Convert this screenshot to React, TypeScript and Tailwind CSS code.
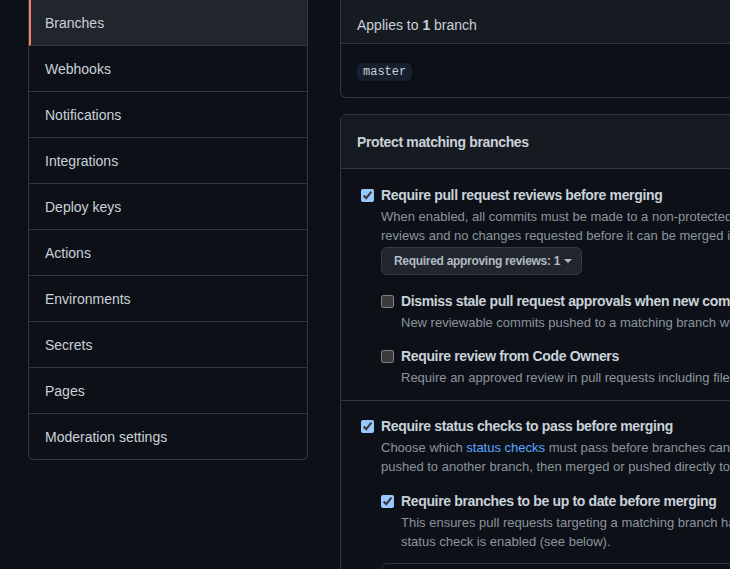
import React from 'react';

const menuItems = [
  'Branches',
  'Webhooks',
  'Notifications',
  'Integrations',
  'Deploy keys',
  'Actions',
  'Environments',
  'Secrets',
  'Pages',
  'Moderation settings',
];

type RuleProps = {
  label: string;
  checked?: boolean;
  nested?: boolean;
  children?: React.ReactNode;
  className?: string;
};

const Rule: React.FC<RuleProps> = ({ label, checked, nested, children, className = '' }) => (
  <div className={`flex gap-[7px] ${className}`}>
    <input
      type="checkbox"
      defaultChecked={checked}
      className={`w-[13px] h-[13px] mt-[4px] shrink-0 [color-scheme:dark] ${nested ? '' : 'ml-1'}`}
    />
    <div className="flex-1 min-w-0">
      <div className="text-sm leading-5 font-bold tracking-[-0.35px] text-[#c9d1d9] whitespace-nowrap">{label}</div>
      {children}
    </div>
  </div>
);

const Note: React.FC<{ children: React.ReactNode }> = ({ children }) => (
  <p className="mt-[2px] text-[13px] leading-[19px] text-[#8b949e] whitespace-nowrap">{children}</p>
);

export default function App() {
  return (
    <div
      className="h-[569px] w-full overflow-hidden bg-[#0d1117] text-[#c9d1d9]"
      style={{ fontFamily: '"Liberation Sans", Arial, sans-serif' }}
    >
      <div className="flex items-start gap-8 pl-7">
        {/* settings menu */}
        <nav className="w-[280px] shrink-0 border-x border-b border-[#30363d] rounded-b-md overflow-hidden">
          {menuItems.map((item, i) => (
            <div
              key={item}
              className={`flex items-center px-4 text-sm text-[#c9d1d9] ${
                i < menuItems.length - 1 ? 'h-[46px] border-b border-[#30363d]' : 'h-[45px]'
              } ${i === 0 ? 'bg-[#21262d] border-l-2 border-l-[#f78166] pl-[14px]' : ''}`}
            >
              {item}
            </div>
          ))}
        </nav>

        {/* rule editor */}
        <div className="w-[760px] shrink-0">
          <div className="border-x border-b border-[#30363d] rounded-b-md">
            <div className="h-[44px] flex items-end px-4 pb-[7px] bg-[#161b22] border-b border-[#30363d] text-sm leading-[21px]">
              <span>
                Applies to <b>1</b> branch
              </span>
            </div>
            <div className="flex px-4 pt-[19px] pb-4">
              <code className="flex items-center h-[18px] px-[6px] rounded-md bg-[#161f2b] text-xs text-[#c9d1d9] font-['Liberation_Mono',monospace]">
                master
              </code>
            </div>
          </div>

          <div className="mt-4 border border-[#30363d] rounded-t-md">
            <div className="px-4 pt-[17px] pb-[15px] bg-[#161b22] border-b border-[#30363d] text-sm leading-[21px] font-bold tracking-[-0.35px]">
              Protect matching branches
            </div>

            <div className="px-4 pt-4 pb-[13px] border-b border-[#30363d]">
              <Rule label="Require pull request reviews before merging" checked>
                <Note>
                  When enabled, all commits must be made to a non-protected branch and submitted via a pull request with the required number of approving
                  <br />
                  reviews and no changes requested before it can be merged into a branch that matches this rule.
                </Note>
                <button className="mt-[2px] h-[28px] flex items-center whitespace-nowrap pl-3 pr-[9px] rounded-md border border-[#363b42] bg-[#21262d] text-xs font-bold tracking-[-0.3px] text-[#b1bac4]">
                  Required approving reviews: 1
                  <svg width="8" height="4" viewBox="0 0 8 4" className="ml-1 shrink-0">
                    <path d="M0 0h8L4 4z" fill="currentColor" />
                  </svg>
                </button>
                <Rule label="Dismiss stale pull request approvals when new commits are pushed" nested className="mt-4">
                  <Note>New reviewable commits pushed to a matching branch will dismiss pull request review approvals.</Note>
                </Rule>
                <Rule label="Require review from Code Owners" nested className="mt-[14px]">
                  <Note>Require an approved review in pull requests including files with a designated code owner.</Note>
                </Rule>
              </Rule>
            </div>

            <div className="px-4 pt-[15px] pb-4">
              <Rule label="Require status checks to pass before merging" checked>
                <Note>
                  Choose which <span className="text-[#58a6ff]">status checks</span> must pass before branches can be merged into a branch that matches this rule. When enabled, commits must first be
                  <br />
                  pushed to another branch, then merged or pushed directly to a branch that matches this rule after status checks have passed.
                </Note>
                <Rule label="Require branches to be up to date before merging" checked nested className="mt-[15px]">
                  <Note>
                    This ensures pull requests targeting a matching branch have been tested with the latest code. This setting will not take effect unless at least one
                    <br />
                    status check is enabled (see below).
                  </Note>
                </Rule>
                <div className="mt-[12px] h-[60px] border border-[#30363d] rounded-md" />
              </Rule>
            </div>
          </div>
        </div>
      </div>
    </div>
  );
}
